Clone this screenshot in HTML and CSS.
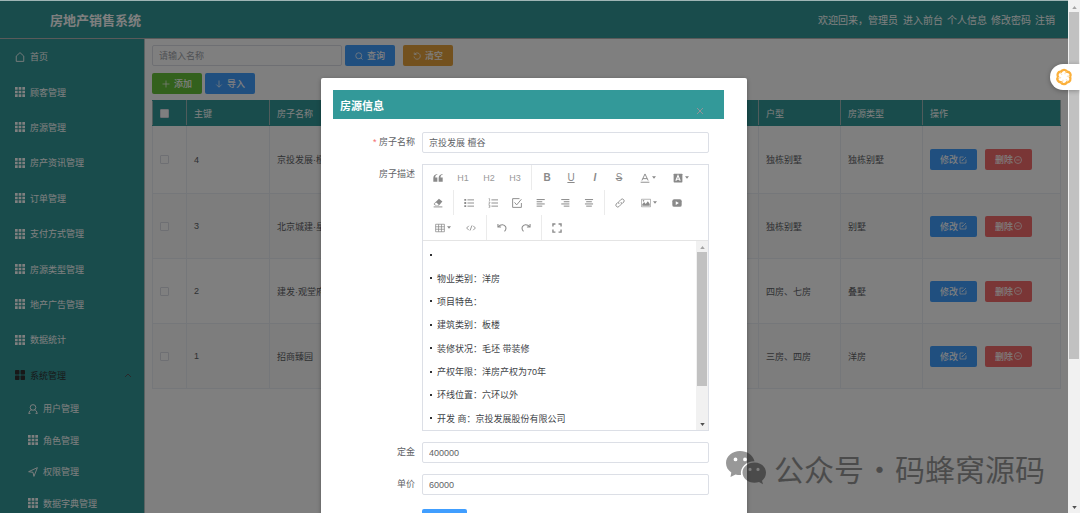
FILE: index.html
```html
<!DOCTYPE html>
<html lang="zh-CN">
<head>
<meta charset="utf-8">
<title>房地产销售系统</title>
<link rel="stylesheet" href="styles.css">
</head>
<body>
<svg class="defs" aria-hidden="true">
  <symbol id="grid" viewBox="0 0 9 9"><path fill="currentColor" d="M0 0h2.4v2.4H0zM3.3 0h2.4v2.4H3.3zM6.6 0H9v2.4H6.6zM0 3.3h2.4v2.4H0zM3.3 3.3h2.4v2.4H3.3zM6.6 3.3H9v2.4H6.6zM0 6.6h2.4V9H0zM3.3 6.6h2.4V9H3.3zM6.6 6.6H9V9H6.6z"/></symbol>
  <symbol id="edit" viewBox="0 0 16 16"><path d="M9 2H2v12h12V7M6.500 9.500 14 2M6 10l1-3" fill="none" stroke="currentColor" stroke-width="1.500"/></symbol>
  <symbol id="minus" viewBox="0 0 16 16"><circle cx="8" cy="8" r="7" fill="none" stroke="currentColor" stroke-width="1.500"/><path d="M4.500 8h7" stroke="currentColor" stroke-width="1.500"/></symbol>
  <symbol id="caret" viewBox="0 0 6 4"><path d="M0 0h6L3 4z" fill="currentColor"/></symbol>
</svg>
<div class="window">
  <div class="app">
    <header class="topbar">
      <h1 class="brand">房地产销售系统</h1>
      <nav class="account"><span>欢迎回来，管理员</span><a href="#">进入前台</a><a href="#">个人信息</a><a href="#">修改密码</a><a href="#">注销</a></nav>
    </header>
    <div class="body">
      <nav class="sidebar">
        <ul class="menu">
          <li><a href="#"><svg class="ico" viewBox="1 0 14 16"><path d="M2 15V6.500L8 1l6 5.500V15z" fill="none" stroke="currentColor" stroke-width="1.400"/></svg>首页</a></li>
          <li><a href="#"><svg class="ico"><use href="#grid"/></svg>顾客管理</a></li>
          <li><a href="#"><svg class="ico"><use href="#grid"/></svg>房源管理</a></li>
          <li><a href="#"><svg class="ico"><use href="#grid"/></svg>房产资讯管理</a></li>
          <li><a href="#"><svg class="ico"><use href="#grid"/></svg>订单管理</a></li>
          <li><a href="#"><svg class="ico"><use href="#grid"/></svg>支付方式管理</a></li>
          <li><a href="#"><svg class="ico"><use href="#grid"/></svg>房源类型管理</a></li>
          <li><a href="#"><svg class="ico"><use href="#grid"/></svg>地产广告管理</a></li>
          <li><a href="#"><svg class="ico"><use href="#grid"/></svg>数据统计</a></li>
          <li><a href="#" class="open"><svg class="ico" viewBox="0 0 9 9"><g fill="currentColor"><rect width="4" height="4" rx=".6"/><rect x="5" width="4" height="4" rx=".6"/><rect y="5" width="4" height="4" rx=".6"/><rect x="5" y="5" width="4" height="4" rx=".6"/></g></svg>系统管理<svg class="arrow" viewBox="0 0 8 5"><path d="M1 4l3-3 3 3" fill="none" stroke="currentColor"/></svg></a></li>
        </ul>
        <ul class="menu submenu">
          <li><a href="#"><svg class="ico" viewBox="0 0 16 16"><g fill="none" stroke="currentColor" stroke-width="1.500"><circle cx="8" cy="5.500" r="4.500"/><path d="M1.500 15.500c0-4 2.500-6 4.500-6.300M14.500 15.500c0-4-2.500-6-4.500-6.300M1 15h3M12 15h3"/></g></svg>用户管理</a></li>
          <li><a href="#"><svg class="ico"><use href="#grid"/></svg>角色管理</a></li>
          <li><a href="#"><svg class="ico" viewBox="0 0 16 16"><path d="M1 7.500 15 1 9.500 15 8 8.500z" fill="none" stroke="currentColor" stroke-width="1.500"/></svg>权限管理</a></li>
          <li><a href="#"><svg class="ico"><use href="#grid"/></svg>数据字典管理</a></li>
        </ul>
      </nav>
      <main class="content">
        <div class="bar search">
          <input class="field" type="text" placeholder="请输入名称" aria-label="名称">
          <button class="btn blue"><svg viewBox="0 0 16 16"><path d="M11.500 11.500 15 15" stroke="currentColor" stroke-width="1.500"/><circle cx="7.500" cy="7.500" r="6" fill="none" stroke="currentColor" stroke-width="1.500"/></svg>查询</button>
          <button class="btn orange"><svg viewBox="0 0 16 16"><path d="M4 3.500a6.300 6.300 0 1 1-2 5.500M2.500 1v4H7" fill="none" stroke="currentColor" stroke-width="1.500"/></svg>清空</button>
        </div>
        <div class="bar">
          <button class="btn green"><svg viewBox="0 0 16 16"><path d="M8 1v14M1 8h14" stroke="currentColor" stroke-width="1.400"/></svg>添加</button>
          <button class="btn blue"><svg viewBox="0 0 16 16"><path d="M8 1v13M2.500 9 8 14.500 13.500 9" fill="none" stroke="currentColor" stroke-width="1.400"/></svg>导入</button>
        </div>
        <table class="list">
          <colgroup><col class="c-check"><col class="c-id"><col class="c-std"><col class="c-mid"><col class="c-std"><col class="c-std"><col class="c-act"></colgroup>
          <thead><tr><th><input type="checkbox" aria-label="全选"></th><th>主键</th><th>房子名称</th><th></th><th>户型</th><th>房源类型</th><th>操作</th></tr></thead>
          <tbody>
            <tr><td><input type="checkbox" aria-label="选择 4"></td><td>4</td><td>京投发展·檀谷</td><td></td><td>独栋别墅</td><td>独栋别墅</td><td><div class="acts"><button class="btn blue">修改<svg><use href="#edit"/></svg></button><button class="btn red">删除<svg><use href="#minus"/></svg></button></div></td></tr>
            <tr><td><input type="checkbox" aria-label="选择 3"></td><td>3</td><td>北京城建·星誉</td><td></td><td>独栋别墅</td><td>别墅</td><td><div class="acts"><button class="btn blue">修改<svg><use href="#edit"/></svg></button><button class="btn red">删除<svg><use href="#minus"/></svg></button></div></td></tr>
            <tr><td><input type="checkbox" aria-label="选择 2"></td><td>2</td><td>建发·观堂府</td><td></td><td>四房、七房</td><td>叠墅</td><td><div class="acts"><button class="btn blue">修改<svg><use href="#edit"/></svg></button><button class="btn red">删除<svg><use href="#minus"/></svg></button></div></td></tr>
            <tr><td><input type="checkbox" aria-label="选择 1"></td><td>1</td><td>招商臻园</td><td></td><td>三房、四房</td><td>洋房</td><td><div class="acts"><button class="btn blue">修改<svg><use href="#edit"/></svg></button><button class="btn red">删除<svg><use href="#minus"/></svg></button></div></td></tr>
          </tbody>
        </table>
      </main>
    </div>
    <div class="mask">
      <section class="dialog" role="dialog" aria-labelledby="dlg-title">
        <header class="dialog-head"><h2 id="dlg-title">房源信息</h2><button class="close" aria-label="关闭"><svg viewBox="0 0 8 8"><path d="M1 1l6 6M7 1 1 7" stroke="currentColor"/></svg></button></header>
        <form class="form">
          <div class="row"><label for="name"><i>*</i> 房子名称</label><input class="field" id="name" type="text" value="京投发展 檀谷"></div>
          <div class="row"><span class="label" id="desc">房子描述</span>
            <div class="editor" aria-labelledby="desc">
              <div class="tools">
                <div class="line">
                  <div class="group">
                    <button type="button" aria-label="引用"><svg viewBox="0 0 16 16"><path fill="currentColor" d="M7 2.500C4.500 3 3.500 5 3.500 7H7v7H.5V8C.5 4.500 3 2 7 1.500zM15.500 2.500C13 3 12 5 12 7h3.500v7H9V8c0-3.500 2.500-6 6.500-6.500z"/></svg></button>
                    <button type="button" class="h">H1</button><button type="button" class="h">H2</button><button type="button" class="h">H3</button>
                  </div>
                  <div class="group">
                    <button type="button" class="b">B</button><button type="button" class="u">U</button><button type="button" class="it">I</button><button type="button" class="s">S</button>
                    <button type="button" class="drop" aria-label="文字颜色"><svg viewBox="0 0 16 16"><path d="M3 12 8 1.500 13 12M4.500 9h7" fill="none" stroke="currentColor" stroke-width="1.500"/><path d="M1 14h14v1.500H1z" fill="currentColor"/></svg><svg class="caret"><use href="#caret"/></svg></button>
                    <button type="button" class="drop" aria-label="背景颜色"><svg viewBox="0 0 16 16"><rect x="1" y="1" width="14" height="14" rx="1" fill="currentColor"/><path d="M4.500 12.500 8 4l3.500 8.500M5.800 10h4.400" fill="none" stroke="#fff" stroke-width="1.700"/></svg><svg class="caret"><use href="#caret"/></svg></button>
                  </div>
                </div>
                <div class="line">
                  <div class="group"><button type="button" aria-label="清除格式"><svg viewBox="0 0 16 16"><path d="M9.500 1 15 5.500 9.500 12h-6L1 9.500z" fill="currentColor"/><path d="M2.500 9 5 7l4 3.500-1 1H4.500z" fill="#fff"/><path d="M1 13.500h14V15H1z" fill="currentColor"/></svg></button></div>
                  <div class="group">
                    <button type="button" aria-label="无序列表"><svg viewBox="0 0 16 16"><path d="M5.500 3H16M5.500 8H16M5.500 13H16" stroke="currentColor" stroke-width="1.500"/><path d="M.5 1.500h3v3h-3zM.5 6.500h3v3h-3zM.5 11.500h3v3h-3z" fill="currentColor"/></svg></button>
                    <button type="button" aria-label="有序列表"><svg viewBox="0 0 16 16"><path d="M5.500 3H16M5.500 8H16M5.500 13H16" stroke="currentColor" stroke-width="1.500"/><path d="M1 1h1.500v4M1 6.500h2v1.500L1 9.500h2M1 11.500h2v3.500H1M1.500 13H3" fill="none" stroke="currentColor"/></svg></button>
                    <button type="button" aria-label="待办"><svg viewBox="0 0 16 16"><path d="M15 8v7H1V1h11M4 7l3.500 4L15 2" fill="none" stroke="currentColor" stroke-width="1.500"/></svg></button>
                    <button type="button" aria-label="左对齐"><svg viewBox="0 0 16 16"><path d="M1 2.500h13M1 6h9M1 9.500h13M1 13h9" stroke="currentColor" stroke-width="1.600"/></svg></button>
                    <button type="button" aria-label="右对齐"><svg viewBox="0 0 16 16"><path d="M2 2.500h13M6 6h9M2 9.500h13M6 13h9" stroke="currentColor" stroke-width="1.600"/></svg></button>
                    <button type="button" aria-label="居中"><svg viewBox="0 0 16 16"><path d="M1.500 2.500h13M3.500 6h9M1.500 9.500h13M3.500 13h9" stroke="currentColor" stroke-width="1.600"/></svg></button>
                  </div>
                  <div class="group">
                    <button type="button" aria-label="链接"><svg viewBox="0 0 16 16"><path d="M6.500 9.500a3 3 0 0 1 0-4L9.800 2.200a3 3 0 0 1 4.200 4.200L11.500 9M9.500 6.500a3 3 0 0 1 0 4l-3.300 3.300A3 3 0 0 1 2 9.600L4.500 7" fill="none" stroke="currentColor" stroke-width="1.500"/></svg></button>
                    <button type="button" class="drop" aria-label="图片"><svg viewBox="0 0 16 16"><path d="M.7 2h14.600v12H.7z" fill="none" stroke="currentColor"/><path d="M2 12.500V10l3-3.500 2.500 3 3.500-4.500 3 4.500v3z" fill="currentColor"/><circle cx="4" cy="4.500" r="1.300" fill="currentColor"/></svg><svg class="caret"><use href="#caret"/></svg></button>
                    <button type="button" aria-label="视频"><svg viewBox="0 0 16 16"><rect x=".5" y="2" width="15" height="12" rx="3" fill="currentColor"/><path d="M6 5l5 3-5 3z" fill="#fff"/></svg></button>
                  </div>
                </div>
                <div class="line">
                  <div class="group">
                    <button type="button" class="drop" aria-label="表格"><svg viewBox="0 0 16 16"><path d="M1 2h14v12H1zM1 6h14M1 10h14M5.700 2v12M10.300 2v12" fill="none" stroke="currentColor" stroke-width="1.200"/></svg><svg class="caret"><use href="#caret"/></svg></button>
                    <button type="button" aria-label="代码"><svg viewBox="0 0 16 16"><path d="M4.500 4.500 1 8l3.500 3.500M11.500 4.500 15 8l-3.500 3.500M9.500 4l-3 8" fill="none" stroke="currentColor" stroke-width="1.400"/></svg></button>
                  </div>
                  <div class="group">
                    <button type="button" aria-label="撤销"><svg viewBox="0 0 16 16"><path d="M1.500 1.500v5h5M2 6C6 1.500 12 2 14 6.500c1 3 0 5-2 7" fill="none" stroke="currentColor" stroke-width="1.700"/></svg></button>
                    <button type="button" aria-label="重做"><svg viewBox="0 0 16 16"><path d="M14.500 1.500v5h-5M14 6C10 1.500 4 2 2 6.500c-1 3 0 5 2 7" fill="none" stroke="currentColor" stroke-width="1.700"/></svg></button>
                  </div>
                  <div class="group"><button type="button" aria-label="全屏"><svg viewBox="0 0 16 16"><path d="M1.500 5.500v-4h4M10.500 1.500h4v4M14.500 10.500v4h-4M5.500 14.500h-4v-4" fill="none" stroke="currentColor" stroke-width="2.200"/></svg></button></div>
                </div>
              </div>
              <div class="pane">
                <ul class="text" contenteditable="true"><li></li><li>物业类别：洋房</li><li>项目特色：</li><li>建筑类别：板楼</li><li>装修状况：毛坯 带装修</li><li>产权年限：洋房产权为70年</li><li>环线位置：六环以外</li><li>开发 商：京投发展股份有限公司</li></ul>
                <div class="scroll" aria-hidden="true"><svg class="up" viewBox="0 0 6 4"><path d="M0 4h6L3 0z"/></svg><span class="track"><span class="thumb short"></span></span><svg viewBox="0 0 6 4"><path d="M0 0h6L3 4z"/></svg></div>
              </div>
            </div>
          </div>
          <div class="row"><label for="deposit">定金</label><input class="field" id="deposit" type="text" value="400000"></div>
          <div class="row"><label for="price">单价</label><input class="field" id="price" type="text" value="60000"></div>
          <div class="row upload"><span class="label">图片</span><button type="button" class="btn blue" aria-label="上传图片"></button></div>
        </form>
      </section>
    </div>
  </div>
  <div class="scroll page" aria-hidden="true"><svg class="up" viewBox="0 0 6 4"><path d="M0 4h6L3 0z"/></svg><span class="track"><span class="thumb"></span></span><svg viewBox="0 0 6 4"><path d="M0 0h6L3 4z"/></svg></div>
  <button class="helper" aria-label="助手"><svg viewBox="0 0 20 20"><g fill="none" stroke="#fbb03b" stroke-width="2.600" stroke-linecap="round"><path id="petal" d="M6.500 4.500C8 1.500 12 1.200 13.300 4.200"/><use href="#petal" transform="rotate(60 10 10)"/><use href="#petal" transform="rotate(120 10 10)"/><use href="#petal" transform="rotate(180 10 10)"/><use href="#petal" transform="rotate(240 10 10)"/><use href="#petal" transform="rotate(300 10 10)"/></g><g fill="none" stroke="#fddba6" stroke-width="1"><path id="vane" d="M6.500 4.500C6 6.500 6.800 7.300 8 7.300"/><use href="#vane" transform="rotate(60 10 10)"/><use href="#vane" transform="rotate(120 10 10)"/><use href="#vane" transform="rotate(180 10 10)"/><use href="#vane" transform="rotate(240 10 10)"/><use href="#vane" transform="rotate(300 10 10)"/></g></svg></button>
  <div class="watermark">
    <svg viewBox="0 0 40 34"><path fill-rule="evenodd" d="M14 0C6.300 0 0 5.200 0 12c0 4 2 7.200 5.300 9.500L4.500 26l5-2.600c1.600.4 3.500.7 5.500.6C14 16 20 10.500 28.500 10.300 27 4 21 0 14 0zM9.500 6.500a1.900 1.900 0 1 1 0 3.800 1.900 1.900 0 0 1 0-3.800zm9.500 0a1.900 1.900 0 1 1 0 3.800 1.900 1.900 0 0 1 0-3.800z"/><path fill-rule="evenodd" d="M28.500 11.500C22 11.500 16.500 16 16.500 21.500S22 31.800 28.500 31.800c1.500 0 3-.3 4.500-.7l4 2.100-1-3.500c2.500-2 4-4.700 4-8.200 0-5.500-5-10-11.500-10zM24 16.800a1.600 1.600 0 1 1 0 3.200 1.600 1.600 0 0 1 0-3.200zm8 0a1.600 1.600 0 1 1 0 3.200 1.600 1.600 0 0 1 0-3.200z"/></svg>
    <span>公众号</span><span class="dot">·</span><span>码蜂窝源码</span>
  </div>
</div>
</body>
</html>
```
FILE: styles.css
```css
* { box-sizing: border-box; }
body, h1, h2, ul { margin: 0; padding: 0; }
body { font-family: "Liberation Sans", "Noto Sans CJK SC", sans-serif; font-size: 9px; color: #606266; }
button, input { font: inherit; color: inherit; margin: 0; }
button { padding: 0; border: 0; background: none; }
a { color: inherit; text-decoration: none; }
ul { list-style: none; }
.defs { position: absolute; width: 0; height: 0; }

.window { position: relative; display: flex; height: 100vh; overflow: hidden; background: #9fb5b5; }
.app { position: relative; flex: 1; min-width: 0; margin-top: 1px; overflow: hidden; background: #fff; }

.topbar { display: flex; align-items: center; justify-content: space-between; height: 38px; padding: 0 13px 0 50px; background: #399; color: #fff; border-bottom: 1px solid #b4b4b4; }
.brand { font-size: 13px; font-weight: 700; }
.account { display: flex; gap: 4px; font-size: 10px; }
.account span { margin-right: 1px; }

.body { display: flex; align-items: flex-start; }
.sidebar { flex: none; width: 145px; background: #399; color: #fff; border-right: 1px solid #b4c4c4; }
.menu { display: grid; grid-auto-rows: 1fr; min-height: 354px; }
.menu a { display: flex; align-items: center; gap: 5px; height: 100%; padding: 0 12px 0 15px; }
.menu .open { color: #303133; }
.ico { width: 10px; height: 10px; }
.arrow { width: 8px; height: 5px; margin-left: auto; color: #505458; }
.submenu { min-height: 126px; }
.submenu a { padding-left: 28px; }

.content { flex: 1; min-width: 0; padding: 6px 7px; }
.bar { display: flex; gap: 3px; margin-bottom: 6px; }
.search { margin-bottom: 7px; }
.search .field { width: 190px; }
.search .orange { margin-left: 5px; }
.field { height: 21px; padding: 0 6px; border: 1px solid #dcdfe6; border-radius: 2px; background: #fff; font-size: 9px; outline: 0; }
.field::placeholder { color: #a0a3aa; }
.btn { display: inline-flex; align-items: center; justify-content: center; gap: 4px; height: 21px; min-width: 50px; border-radius: 2px; color: #fff; font-weight: 500; }
.btn svg { width: 8px; height: 8px; }
.blue { background: #409eff; }
.green { background: #67c23a; }
.orange { background: #e6a23c; }
.red { background: #f56c6c; }

.list { width: 100%; table-layout: fixed; border-collapse: collapse; }
.c-check { width: 34px; }
.c-id { width: 83px; }
.c-std { width: 82px; }
.c-act { width: 138px; }
.list th, .list td { padding: 0 7px; border: 1px solid #ebeef5; text-align: left; white-space: nowrap; }
.list th { height: 25px; background: #399; color: #fff; font-weight: 400; border-color: #399 #a0b8b8; }
.list td { height: 65px; }
.list tbody tr:first-child td { height: 68px; }
.list tbody tr:nth-child(even) { background: #fafafa; }
.list input { appearance: none; display: block; width: 9px; height: 9px; border: 1px solid #dcdfe6; border-radius: 1px; background: #fff; }
.acts { display: flex; gap: 8px; }
.acts .btn { min-width: 47px; gap: 1px; }

.mask { position: absolute; inset: 0; display: flex; justify-content: center; align-items: flex-start; background: rgba(0, 0, 0, .5); }
.dialog { width: 39%; min-width: 426px; min-height: 100%; margin-top: 77px; padding: 12px; background: #fff; border-radius: 2px; box-shadow: 0 1px 4px rgba(0, 0, 0, .3); }
.dialog-head { display: flex; align-items: center; justify-content: space-between; height: 29px; margin-right: 11px; padding: 0 20px 0 7px; background: #399; }
.dialog-head h2 { font-size: 11px; color: #fff; }
.close { align-self: flex-end; padding-bottom: 4px; color: #909399; }
.close svg { display: block; width: 8px; height: 8px; }

.form { display: grid; gap: 11px; margin: 13px 26px 0 0; }
.row { display: grid; grid-template-columns: 82px 1fr; column-gap: 7px; }
.row label, .label { line-height: 21px; text-align: right; }
.row i { color: #f56c6c; font-style: normal; }
.upload { margin-top: 3px; }
.upload .btn { min-width: 45px; justify-self: start; }

.editor { border: 1px solid #dcdfe6; }
.tools { color: #8a8a8a; border-bottom: 1px solid #e4e4e4; }
.line { display: flex; height: 25px; }
.group { display: flex; padding: 0 3px; border-right: 1px solid #ebebeb; }
.group:last-child { border-right: 0; }
.group button { display: flex; align-items: center; justify-content: center; width: 24px; font-size: 10px; }
.group svg { width: 10px; height: 10px; }
.group .h { width: 26px; font-size: 9px; color: #999; }
.group .b { font-weight: 700; }
.group .u { text-decoration: underline; }
.group .it { font-style: italic; font-weight: 700; }
.group .s { text-decoration: line-through; }
.group .drop { width: 33px; gap: 2px; }
.group .caret { width: 4px; height: 3px; }
.pane { display: flex; }
.text { flex: 1; display: grid; grid-auto-rows: 1fr; min-height: 189px; padding: 2px 7px 0; color: #404347; outline: 0; }
.text li { display: flex; align-items: center; white-space: pre; }
.text li::before { content: ""; width: 2px; height: 2px; margin-right: 5px; background: #303133; }

.scroll { display: flex; flex-direction: column; align-items: center; width: 12px; padding: 5px 1px 4px; background: #f1f1f1; }
.scroll svg { flex: none; width: 5px; height: 3px; fill: #505050; }
.scroll .up { fill: #a3a3a3; }
.track { flex: 1; width: 100%; padding: 3px 0 5px; }
.thumb { display: block; height: 71%; background: #c1c1c1; }
.short { height: 81%; }
.page { flex: none; padding-top: 6px; }

.helper { position: absolute; top: 64px; right: 0; display: flex; align-items: center; width: 30px; height: 26px; padding-left: 5px; border-radius: 13px 0 0 13px; background: #fff; box-shadow: 0 1px 5px rgba(0, 0, 0, .3); }
.helper svg { width: 18px; height: 18px; }

.watermark { position: absolute; right: 35px; bottom: 22px; display: flex; align-items: center; color: #000; opacity: .4; font-size: 30px; line-height: 46px; font-family: "Noto Sans CJK SC", sans-serif; pointer-events: none; }
.watermark svg { width: 40px; height: 34px; margin-right: 8px; }
.watermark .dot { width: 31px; text-align: center; }
```
